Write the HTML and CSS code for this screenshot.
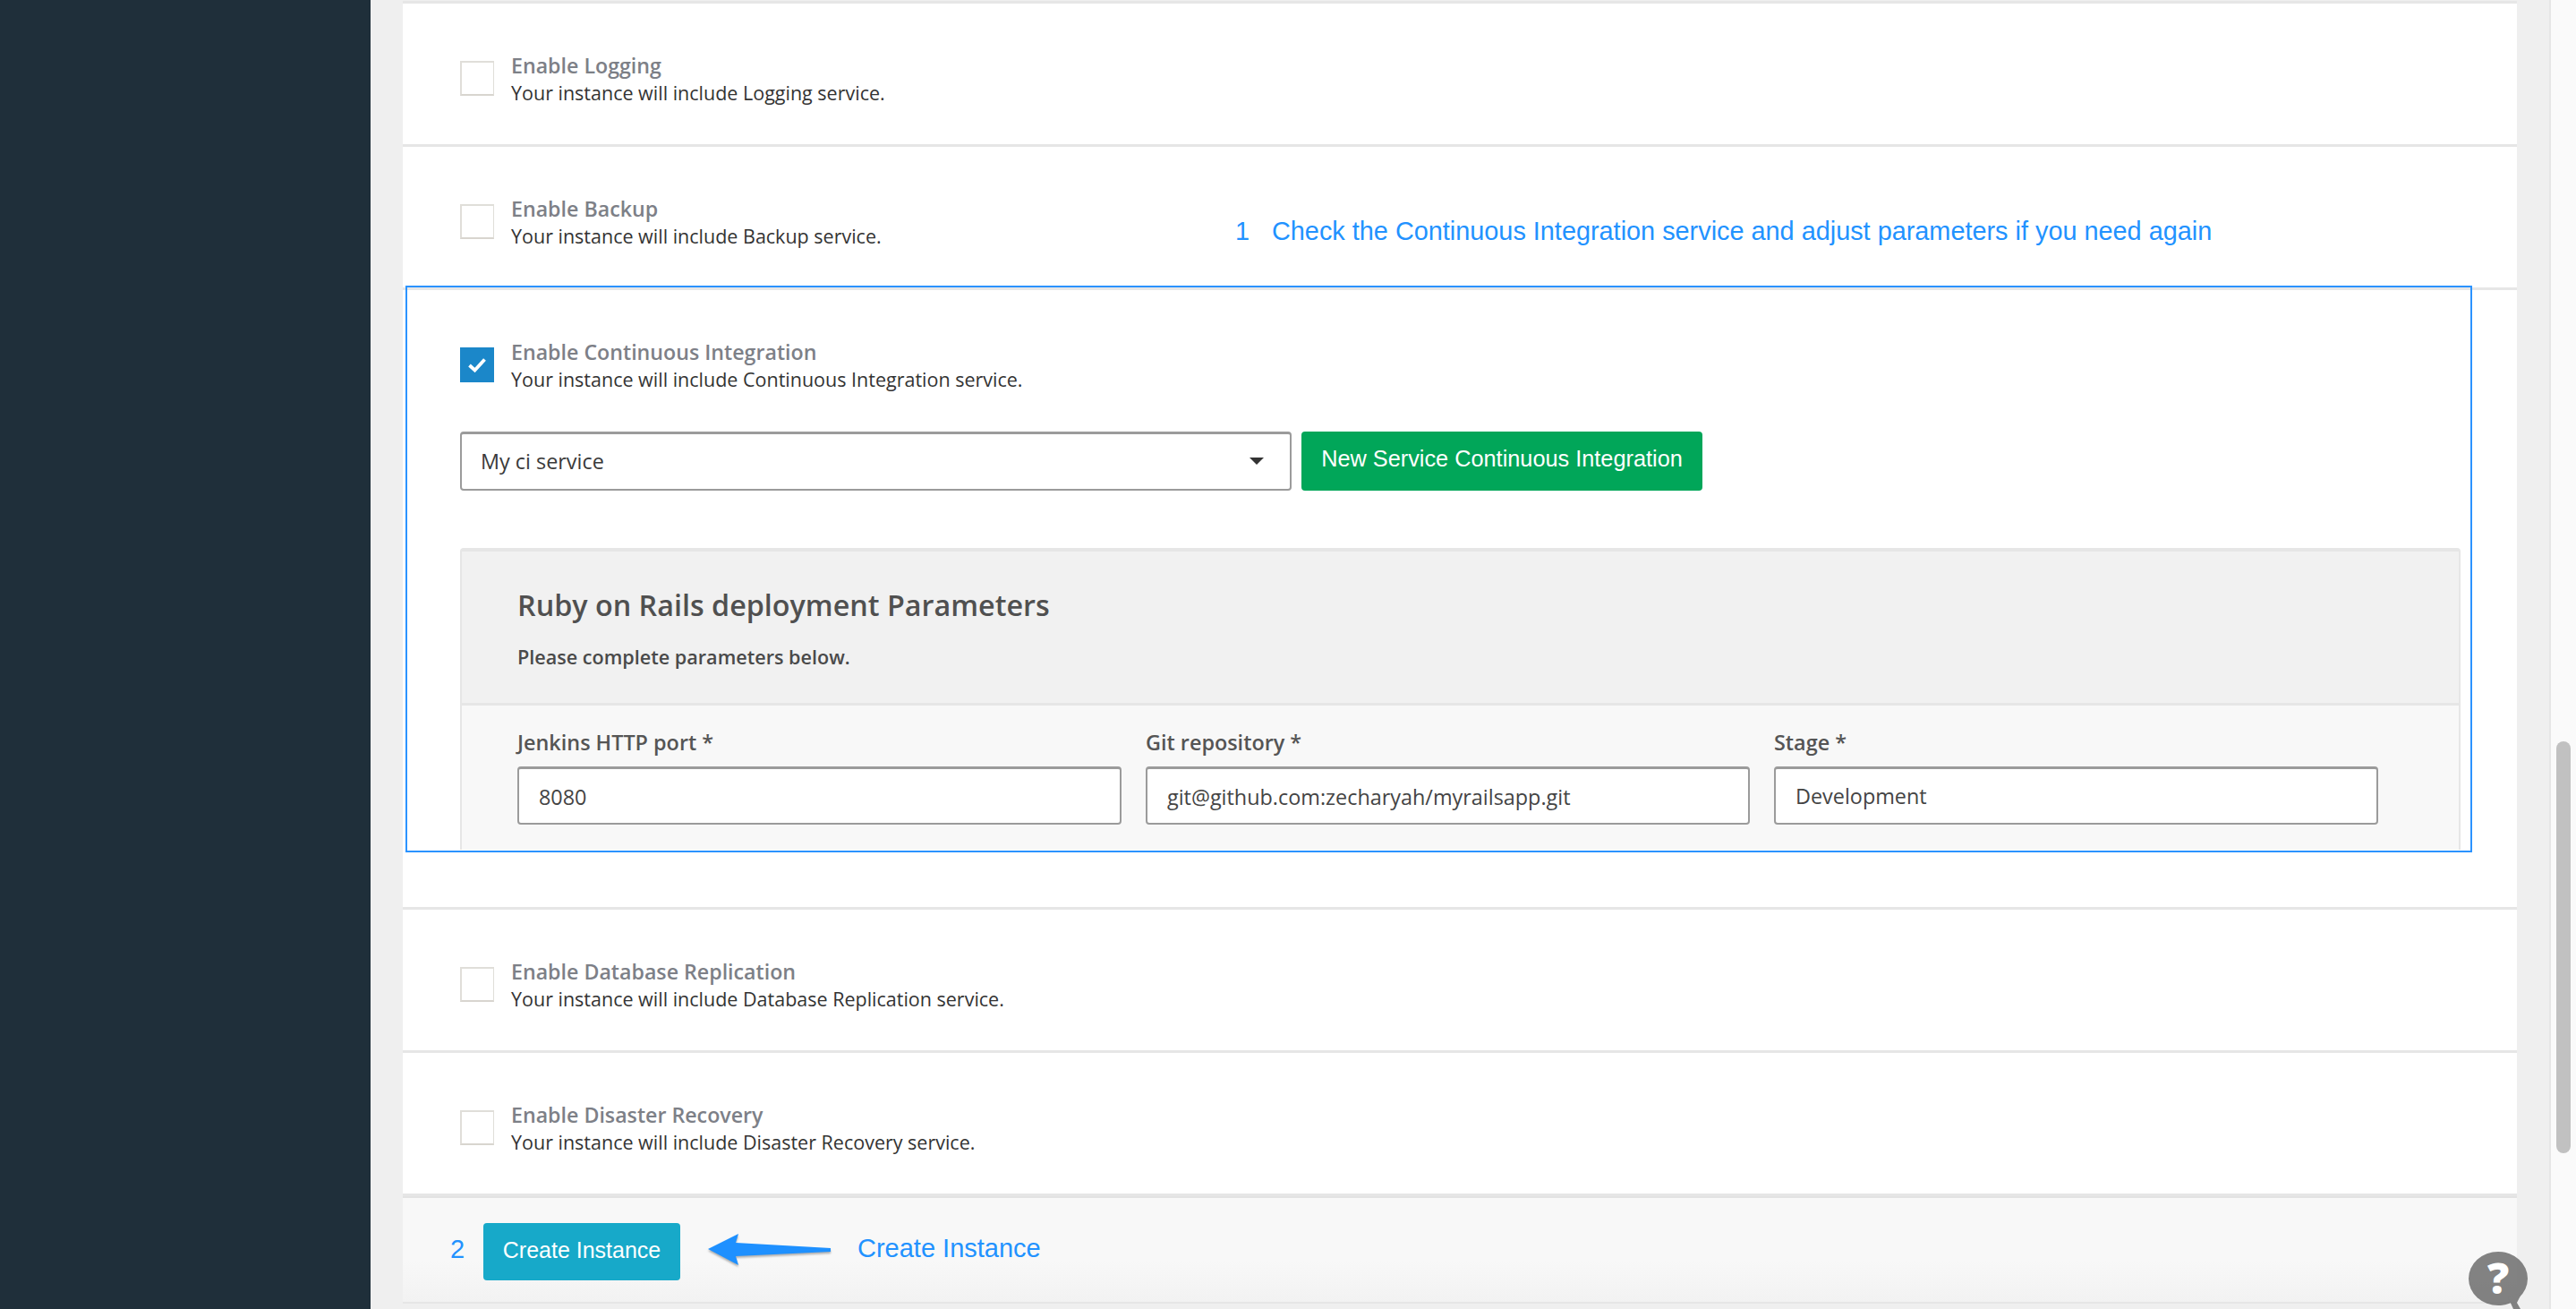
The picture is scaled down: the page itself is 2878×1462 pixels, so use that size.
FILE: index.html
```html
<!DOCTYPE html>
<html lang="en">
<head>
<meta charset="utf-8">
<title>Create Instance</title>
<link rel="stylesheet" href="styles.css">
</head>
<body>
<div class="app">
  <aside class="sidebar"></aside>
  <main class="main">
    <section class="card">
      <div class="row">
        <div class="option">
          <span class="check"></span>
          <div class="option-text"><div class="option-title">Enable Logging</div><div class="option-desc">Your instance will include Logging service.</div></div>
        </div>
      </div>
      <div class="row">
        <div class="option">
          <span class="check"></span>
          <div class="option-text"><div class="option-title">Enable Backup</div><div class="option-desc">Your instance will include Backup service.</div></div>
        </div>
        <div class="note"><span class="note-num">1</span><span>Check the Continuous Integration service and adjust parameters if you need again</span></div>
      </div>
      <div class="row row-open">
        <div class="callout"></div>
        <div class="option">
          <span class="check check-on"><svg class="tick" viewBox="0 0 20 16"><polyline points="1.5,8 7.5,13.5 18.5,1.5" /></svg></span>
          <div class="option-text"><div class="option-title">Enable Continuous Integration</div><div class="option-desc">Your instance will include Continuous Integration service.</div></div>
        </div>
        <div class="service">
          <div class="select"><span>My ci service</span><span class="caret"></span></div>
          <button class="btn btn-green">New Service Continuous Integration</button>
        </div>
        <div class="panel">
          <div class="panel-head">
            <h2 class="panel-title">Ruby on Rails deployment Parameters</h2>
            <p class="panel-sub">Please complete parameters below.</p>
          </div>
          <div class="panel-body">
            <div class="field"><label class="field-label">Jenkins HTTP port *</label><div class="input input-low">8080</div></div>
            <div class="field"><label class="field-label">Git repository *</label><div class="input input-low">git@github.com:zecharyah/myrailsapp.git</div></div>
            <div class="field"><label class="field-label">Stage *</label><div class="input">Development</div></div>
          </div>
        </div>
      </div>
      <div class="row">
        <div class="option">
          <span class="check"></span>
          <div class="option-text"><div class="option-title">Enable Database Replication</div><div class="option-desc">Your instance will include Database Replication service.</div></div>
        </div>
      </div>
      <div class="row">
        <div class="option">
          <span class="check"></span>
          <div class="option-text"><div class="option-title">Enable Disaster Recovery</div><div class="option-desc">Your instance will include Disaster Recovery service.</div></div>
        </div>
      </div>
      <footer class="footer">
        <span class="step">2</span>
        <button class="btn btn-teal">Create Instance</button>
        <svg class="arrow" viewBox="0 0 140 36"><path d="M0 17 L34 0 L31 10 L137 16 L137 20 L31 25 L34 35 Z"/></svg>
        <span class="footer-note">Create Instance</span>
      </footer>
    </section>
  </main>
  <div class="scrollbar"><div class="thumb"></div></div>
  <div class="help">
    <svg class="help-bubble" viewBox="0 0 66 65"><ellipse cx="33" cy="31" rx="33" ry="30"/><path d="M44 52 L50 65 L58 65 L54 58 L60 46 Z"/></svg>
    <span class="help-mark">?</span>
  </div>
</div>
</body>
</html>
```

FILE: styles.css
```css
* { box-sizing: border-box; }
html, body { margin: 0; padding: 0; height: 100%; }
body { font-family: "Open Sans", sans-serif; background: #f0f0f0; overflow: hidden; }
.app { display: flex; height: 1462px; overflow: hidden; position: relative; }
.sidebar { width: 414px; flex: none; background: #1f2f3a; }
.main { flex: 1; padding: 1px 36px 0; background: #efefef; min-width: 0; }
.card { background: #fff; border-top: 3px solid #e6e6e6; height: 1455px; display: flex; flex-direction: column; }
.row { position: relative; height: 160px; padding: 54px 63px 0 64px; border-bottom: 3px solid #e6e6e6; flex: none; }
.row-open { height: 692px; }
.option { display: flex; align-items: flex-start; }
.check { width: 38px; height: 39px; margin-top: 10px; margin-right: 19px; background: #fff; border: 2px solid #e0ded9; border-bottom-color: #d8d5cf; border-right-width: 1px; flex: none; }
.check-on { background: #1b87c9; border: 0; display: flex; align-items: center; justify-content: center; }
.tick { width: 20px; height: 16px; fill: none; stroke: #fff; stroke-width: 3.8; }
.option-text { line-height: 31px; }
.option-title { font-size: 23.2px; font-weight: 600; color: #7d8087; }
.option-desc { font-size: 21.5px; color: #333; margin-top: -1px; }
.note { position: absolute; left: 930px; top: 75px; display: flex; font-family: "Liberation Sans", Arial, sans-serif; font-size: 28.85px; line-height: 38px; color: #2292ff; }
.note-num { width: 41px; }
.callout { position: absolute; left: 3px; top: -5px; width: 2309px; height: 633px; border: 2px solid #2b93ff; pointer-events: none; z-index: 2; }
.service { display: flex; gap: 11px; margin-top: 43px; }
.select { width: 929px; height: 66px; background: #fff; border: 2px solid #9b9b9b; border-top-width: 3px; border-radius: 4px; display: flex; align-items: center; justify-content: space-between; padding: 0 29px 2px 21px; font-size: 23.4px; color: #3a3a3a; }
.caret { width: 0; height: 0; border-left: 8px solid transparent; border-right: 8px solid transparent; border-top: 8px solid #333; }
.btn { border: 0; border-radius: 4px; color: #fff; font-family: "Liberation Sans", Arial, sans-serif; height: 66px; padding: 0; }
.btn-green { width: 448px; background: #01a659; padding-bottom: 6px; font-size: 25.3px; }
.btn-teal { width: 220px; height: 64px; background: #17a9c9; font-size: 25px; padding-bottom: 3px; }
.panel { margin-top: 64px; height: 337px; overflow: hidden; border: 2px solid #e6e6e6; border-top-width: 4px; border-bottom: 0; border-radius: 4px 4px 0 0; background: #f8f8f8; }
.panel-head { height: 172px; background: #f1f1f1; border-bottom: 3px solid #e6e6e6; padding: 36px 62px 0; }
.panel-title { margin: 0; font-size: 32.3px; font-weight: 600; line-height: 46px; color: #505050; }
.panel-sub { margin: 21px 0 0; font-size: 21.6px; font-weight: 600; line-height: 30px; color: #4a4a4a; }
.panel-body { display: flex; gap: 27px; padding: 24px 62px 0; }
.field { width: 675px; }
.field-label { display: block; font-size: 23.4px; font-weight: 600; line-height: 34px; color: #555; margin-bottom: 10px; }
.input { height: 65px; background: #fff; border: 2px solid #9b9b9b; border-top-width: 3px; border-radius: 4px; padding: 0 22px; display: flex; align-items: center; font-size: 23.4px; color: #444; }
.input-low { padding-top: 2px; }
.footer { flex: 1; border-top: 2px solid #e2e2e2; border-bottom: 2px solid #e6e6e6; background: linear-gradient(#f8f8f8 60%, #f2f2f2); display: flex; align-items: flex-start; padding: 28px 0 0 53px; }
.step { width: 37px; font-family: "Liberation Sans", Arial, sans-serif; font-size: 29px; line-height: 58px; color: #2292ff; }
.arrow { width: 140px; height: 36px; margin: 12px 27px 0 31px; fill: #1e90ff; filter: drop-shadow(0 2px 1px rgba(0,0,0,.3)); flex: none; }
.footer-note { font-family: "Liberation Sans", Arial, sans-serif; font-size: 29px; line-height: 56px; color: #2292ff; }
.scrollbar { width: 30px; flex: none; background: #fafafa; border-left: 2px solid #e6e6e6; padding: 828px 6px 0; }
.thumb { height: 460px; background: #c1c1c1; border-radius: 8px; }
.help { position: absolute; left: 2758px; top: 1397px; width: 66px; height: 65px; display: flex; justify-content: center; }
.help-bubble { position: absolute; left: 0; top: 0; width: 66px; height: 65px; fill: #6e6e6e; opacity: .85; }
.help-mark { position: relative; color: #fff; font-size: 48px; font-weight: 800; line-height: 60px; height: 60px; }
```
